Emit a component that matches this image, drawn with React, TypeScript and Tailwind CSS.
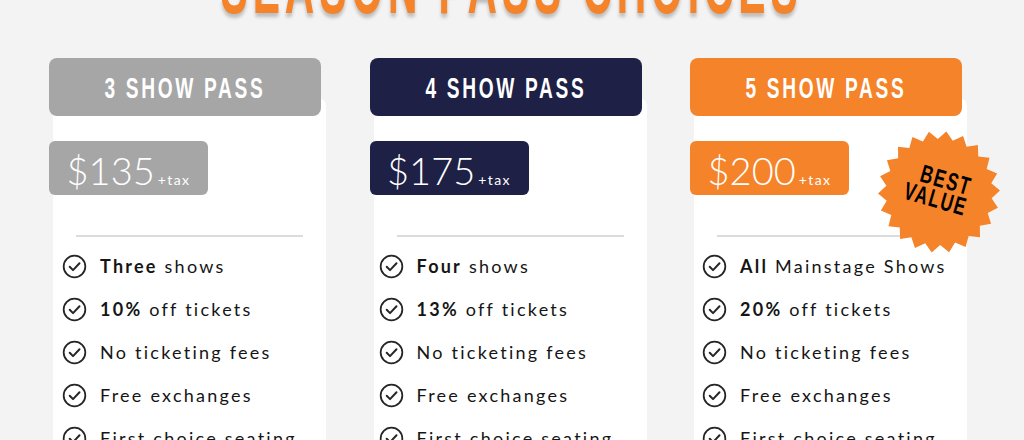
import React from 'react';

type Feature = { bold?: string; rest: string };

type Pass = {
  title: string;
  price: string;
  headerBg: string;
  listPl: string;
  features: Feature[];
  best?: boolean;
};

const passes: Pass[] = [
  {
    title: '3 SHOW PASS',
    price: '$135',
    headerBg: 'bg-[#a6a6a6]',
    listPl: 'pl-[9px]',
    features: [
      { bold: 'Three', rest: ' shows' },
      { bold: '10%', rest: ' off tickets' },
      { rest: 'No ticketing fees' },
      { rest: 'Free exchanges' },
      { rest: 'First choice seating' },
    ],
  },
  {
    title: '4 SHOW PASS',
    price: '$175',
    headerBg: 'bg-[#1e2045]',
    listPl: 'pl-[5px]',
    features: [
      { bold: 'Four', rest: ' shows' },
      { bold: '13%', rest: ' off tickets' },
      { rest: 'No ticketing fees' },
      { rest: 'Free exchanges' },
      { rest: 'First choice seating' },
    ],
  },
  {
    title: '5 SHOW PASS',
    price: '$200',
    headerBg: 'bg-[#f5832a]',
    listPl: 'pl-[8px]',
    best: true,
    features: [
      { bold: 'All', rest: ' Mainstage Shows' },
      { bold: '20%', rest: ' off tickets' },
      { rest: 'No ticketing fees' },
      { rest: 'Free exchanges' },
      { rest: 'First choice seating' },
    ],
  },
];

function CheckIcon() {
  return (
    <svg width="25" height="25" viewBox="0 0 24 24" fill="none" className="shrink-0">
      <circle cx="12" cy="12" r="10.4" stroke="#262626" strokeWidth="1.7" />
      <path d="M7.4 12.2l3.2 3.3 6.2-6.6" stroke="#262626" strokeWidth="1.9" strokeLinecap="round" strokeLinejoin="round" />
    </svg>
  );
}

// starburst badge outline
function starPoints(n: number, outer: number, inner: number, c: number) {
  const pts: string[] = [];
  for (let i = 0; i < n * 2; i++) {
    const r = i % 2 === 0 ? outer : inner;
    const a = (Math.PI * i) / n - Math.PI / 2 + 0.12;
    pts.push(`${(c + r * Math.cos(a)).toFixed(2)},${(c + r * Math.sin(a)).toFixed(2)}`);
  }
  return pts.join(' ');
}

function BestValue() {
  return (
    <div className="absolute left-[188px] top-[73px] z-20 w-[122px] h-[122px]">
      <svg width="122" height="122" viewBox="0 0 122 122" className="absolute inset-0">
        <polygon points={starPoints(22, 61, 53, 61)} fill="#f5832a" />
      </svg>
      <div className="absolute inset-0 flex flex-col items-center justify-center -mt-[6px] rotate-[16deg] font-['Liberation_Sans',sans-serif] font-bold text-black leading-[21px]">
        <span className="inline-block scale-x-[0.68] text-[25px] tracking-[0.1em] ml-[8px]">BEST</span>
        <span className="inline-block scale-x-[0.68] text-[25px] tracking-[0.1em]">VALUE</span>
      </div>
    </div>
  );
}

function PassCard({ pass }: { pass: Pass }) {
  return (
    <div className="relative w-[278px]">
      <div className={`relative z-10 w-[272px] h-[58px] rounded-lg ${pass.headerBg} flex items-center justify-center pt-[3px]`}>
        <span className="inline-block scale-x-[0.66] font-['Liberation_Sans',sans-serif] font-bold text-white text-[29px] tracking-[0.14em] whitespace-nowrap">
          {pass.title}
        </span>
      </div>
      <div className="ml-[4px] -mt-[18px] w-[273px] h-[360px] rounded-lg bg-white pt-[43px]">
        <div className={`-ml-[4px] w-[159px] h-[54px] rounded-md ${pass.headerBg} flex items-baseline justify-center pt-[7px] text-white`}>
          <span className="font-['Lato',sans-serif] font-light text-[38px] leading-[44px]">{pass.price}</span>
          <span className="font-['Lato',sans-serif] text-[14px] tracking-[0.1em] ml-[3px]">+tax</span>
        </div>
        <div className="mt-[40px] mx-[23px] h-[2px] bg-[#dcdcdc]" />
        <ul className="mt-[8px] flex flex-col">
          {pass.features.map((f, i) => (
            <li key={i} className={`h-[43px] flex items-center ${pass.listPl} gap-[13px]`}>
              <CheckIcon />
              <span className="font-['Lato',sans-serif] text-[18px] tracking-[0.125em] text-[#151515] whitespace-nowrap">
                {f.bold && <span className="font-bold">{f.bold}</span>}
                {f.rest}
              </span>
            </li>
          ))}
        </ul>
      </div>
      {pass.best && <BestValue />}
    </div>
  );
}

export default function App() {
  return (
    <div className="w-[1024px] h-[440px] overflow-hidden bg-[#f3f3f3]">
      <div className="-mt-[54px] h-[80px] flex justify-center">
        <h1 className="inline-block scale-x-[0.51] font-['Liberation_Sans',sans-serif] font-bold text-[80px] leading-[80px] tracking-[0.12em] text-[#f5832a] whitespace-nowrap [text-shadow:0_4px_5px_rgba(0,0,0,0.22)]">
          SEASON PASS CHOICES
        </h1>
      </div>
      <div className="mt-[32px] pl-[49px] grid grid-cols-[278px_278px_278px] gap-x-[42.5px]">
        {passes.map((p) => (
          <PassCard key={p.title} pass={p} />
        ))}
      </div>
    </div>
  );
}
